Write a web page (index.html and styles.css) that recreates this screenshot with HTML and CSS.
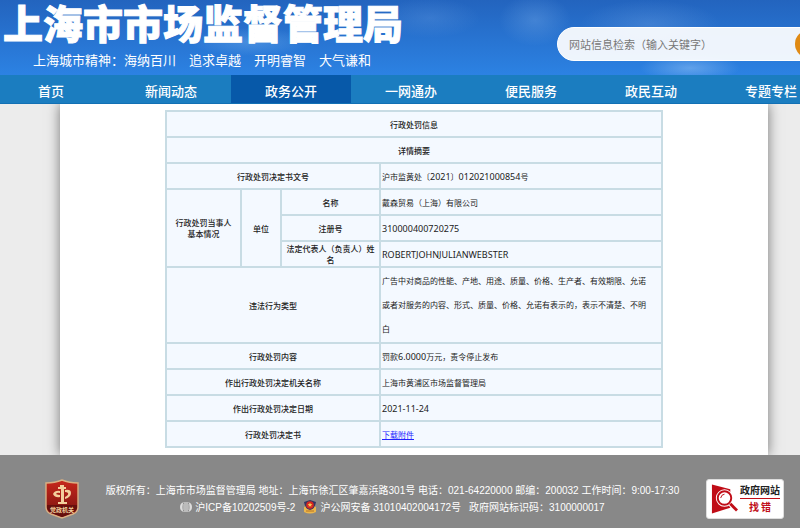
FILE: index.html
```html
<!DOCTYPE html>
<html lang="zh-CN">
<head>
<meta charset="utf-8">
<meta name="viewport" content="width=device-width, initial-scale=1">
<title>上海市市场监督管理局</title>
<link rel="stylesheet" href="styles.css">
</head>
<body>
<header class="banner">
  <div class="brand">
    <h1 class="brand-name">上海市市场监督管理局</h1>
    <p class="motto"><span>上海城市精神：海纳百川</span><span>追求卓越</span><span>开明睿智</span><span>大气谦和</span></p>
  </div>
  <form class="search">
    <input class="search-input" type="text" aria-label="网站信息检索" placeholder="网站信息检索（输入关键字）">
    <button class="search-button" type="button" aria-label="搜索"></button>
  </form>
</header>
<nav class="nav">
  <a href="#">首页</a>
  <a href="#">新闻动态</a>
  <a href="#" class="active">政务公开</a>
  <a href="#">一网通办</a>
  <a href="#">便民服务</a>
  <a href="#">政民互动</a>
  <a href="#">专题专栏</a>
</nav>
<div class="backdrop">
<main class="page">
  <table class="detail">
    <colgroup><col class="c-party"><col class="c-unit"><col class="c-field"><col></colgroup>
    <tbody>
    <tr><th colspan="4">行政处罚信息</th></tr>
    <tr><th colspan="4">详情摘要</th></tr>
    <tr><th colspan="3">行政处罚决定书文号</th><td>沪市监黄处〔<span class="num">2021</span>〕<span class="num">012021000854</span>号</td></tr>
    <tr><th rowspan="3">行政处罚当事人<br>基本情况</th><th rowspan="3">单位</th><th>名称</th><td>戴森贸易（上海）有限公司</td></tr>
    <tr><th>注册号</th><td><span class="num">310000400720275</span></td></tr>
    <tr><th>法定代表人（负责人）姓<br>名</th><td><span class="num">ROBERTJOHNJULIANWEBSTER</span></td></tr>
    <tr><th colspan="3">违法行为类型</th><td class="long">广告中对商品的性能、产地、用途、质量、价格、生产者、有效期限、允诺<br>或者对服务的内容、形式、质量、价格、允诺有表示的，表示不清楚、不明<br>白</td></tr>
    <tr><th colspan="3">行政处罚内容</th><td>罚款<span class="num">6.0000</span>万元，责令停止发布</td></tr>
    <tr><th colspan="3">作出行政处罚决定机关名称</th><td>上海市黄浦区市场监督管理局</td></tr>
    <tr><th colspan="3">作出行政处罚决定日期</th><td><span class="num">2021-11-24</span></td></tr>
    <tr><th colspan="3">行政处罚决定书</th><td><a href="#">下载附件</a></td></tr>
    </tbody>
  </table>
</main>
</div>
<footer class="footer">
  <svg class="shield" viewBox="0 0 34 40" role="img" aria-label="党政机关">
    <defs><linearGradient id="red" x1="0" y1="0" x2="0" y2="1"><stop offset="0" stop-color="#c8281c"/><stop offset="1" stop-color="#74110f"/></linearGradient></defs>
    <path d="M17 1 Q24 4 33 4 V28 Q33 33 28 35 L17 39 L6 35 Q1 33 1 28 V4 Q10 4 17 1Z" fill="url(#red)" stroke="#d9b184" stroke-width="1.4"/>
    <path d="M2 26H32V29Q31 32 27 34L17 38 7 34Q3 32 2 29Z" fill="#650f0d"/>
    <g fill="#f3cf9d"><path d="M15 6h4v2h2v2h-2v14h-3V10h-3V8h2z"/><path d="M8 15q2-4 7-3v2q-3-1-4 1 2 1 4 1v2q-5 1-7-3zM20 11q6-1 6 3t-6 6v-2q4-2 3-4-1-1-3-1zM13 23h9v2h-9z"/></g>
    <text class="shield-text" x="17" y="33" text-anchor="middle">党政机关</text>
  </svg>
  <div class="legal">
    <p>版权所有：上海市市场监督管理局 地址：上海市徐汇区肇嘉浜路301号 电话：021-64220000 邮编：200032 工作时间：9:00-17:30</p>
    <p class="records">
      <span class="record"><svg class="globe" viewBox="0 0 12 12" aria-hidden="true"><path d="M5 1v10M7 1v10" stroke="#eee"/><path d="M4 1Q0 2 0 6t4 5Q2 9 2 6t2-5zM8 1q4 1 4 5t-4 5q2-2 2-5T8 1z" fill="#ddd"/><path d="M3 3v6M9 3v6" stroke="#ddd"/></svg>沪ICP备10202509号-2</span>
      <span class="record"><svg class="police" viewBox="0 0 14 14" aria-hidden="true"><path d="M1 7 1 12Q7 15 13 12L13 7 7 4z" fill="#edb64b"/><path d="M7 0q3 1 6 2-1 7-6 8-5-1-6-8 3-1 6-2z" fill="#343562"/><circle cx="7" cy="5" r="3.8" fill="#d52821"/><path d="M7 2.4l.7 1.5 1.6.2-1.2 1.1.3 1.6L7 6l-1.4.8.3-1.6-1.2-1.1 1.6-.2z" fill="#f6c84c"/><path d="M3 11h8" stroke="#b37427"/></svg>沪公网安备 31010402004172号</span>
      <span class="record">政府网站标识码：3100000017</span>
    </p>
  </div>
  <a class="report" href="#">
    <svg class="report-icon" viewBox="0 0 28 32" aria-hidden="true"><path d="M1 1 20 6V25L1 31Z" fill="#c00d17"/><circle cx="14" cy="15" r="7" fill="#c00d17" stroke="#fff" stroke-width="4"/><circle cx="14" cy="15" r="7" fill="#fff" stroke="#c00d17" stroke-width="2"/><path d="M20 21 27 28" stroke="#fff" stroke-width="5"/><path d="M20 21 27 28" stroke="#c00d17" stroke-width="3"/><path d="M10 15q1-4 4-4" fill="none" stroke="#c00d17"/></svg>
    <span class="report-text"><span class="report-top">政府网站</span><span class="report-bottom"><span>找</span><span>错</span></span></span>
  </a>
</footer>
</body>
</html>
```

FILE: styles.css
```css
* { box-sizing: border-box; }
body {
  margin: 0;
  min-height: 100vh;
  display: flex;
  flex-direction: column;
  overflow-x: hidden;
  font-family: "Noto Sans", "Noto Sans CJK SC", sans-serif;
  background: #ececec;
}
h1, p { margin: 0; }

.banner {
  display: flex;
  justify-content: space-between;
  height: 75px;
  color: #fff;
  font-family: "Noto Sans CJK SC", sans-serif;
  background:
    radial-gradient(ellipse 50px 14px at 690px 68px, rgba(150, 195, 245, .5), transparent),
    radial-gradient(ellipse 70px 24px at 650px 24px, rgba(110, 160, 225, .35), transparent),
    radial-gradient(ellipse 36px 26px at 535px 20px, rgba(110, 165, 230, .4), transparent),
    radial-gradient(ellipse 50px 20px at 430px 18px, rgba(100, 155, 225, .3), transparent),
    radial-gradient(ellipse 60px 14px at 250px 42px, rgba(120, 180, 240, .4), transparent),
    linear-gradient(#2364be, #2c82e3);
}
.brand { padding-left: 3px; }
.brand-name {
  font-size: 40px;
  line-height: 44px;
  font-weight: 900;
  white-space: nowrap;
  -webkit-text-stroke: 1px #fff;
}
.motto {
  display: flex;
  gap: 13px;
  padding-left: 30px;
  font-size: 13px;
  line-height: 32px;
  white-space: nowrap;
}
.search {
  display: flex;
  flex: 0 0 283px;
  height: 34px;
  margin: 27px -40px 0 0;
  border: 1px solid #fff;
  border-radius: 17px;
  background: rgba(255, 255, 255, .92);
}
.search-input {
  flex: 1;
  min-width: 0;
  padding: 0 11px;
  border: 0;
  background: none;
  font: 11px "Noto Sans CJK SC", sans-serif;
  color: #333;
}
.search-input::placeholder { color: #777; }
.search-button {
  width: 44px;
  height: 28px;
  margin-top: 2px;
  border: 0;
  border-radius: 14px;
  background: #e08a14;
}

.nav {
  display: flex;
  height: 29px;
  overflow: hidden;
  background: #1b7dc0;
  border-bottom: 1px solid #1270b4;
}
.nav a {
  flex: 0 0 120px;
  color: #fff;
  font: 500 13px/31px "Noto Sans CJK SC", sans-serif;
  text-align: center;
  text-decoration: none;
}
.nav a:first-child { margin-left: -9px; }
.nav .active { background: #0759a9; }

.backdrop {
  flex: 1;
  display: flex;
  padding: 0 32px 0 60px;
  overflow: hidden;
  background: #ececec;
}
.page {
  flex: 1;
  padding: 6px 105px 7px;
  background: #fff;
  box-shadow: 0 0 12px rgba(0, 0, 0, .5);
}
.detail {
  width: 100%;
  table-layout: fixed;
  border-collapse: collapse;
  color: #222;
  background: #f4f9ff;
  font-size: 8px;
  line-height: 11px;
}
.c-party { width: 75px; }
.c-unit { width: 40px; }
.c-field { width: 99px; }
.detail tr { height: 26px; }
.detail th, .detail td {
  padding: 0 1px;
  border: 2px solid #c8dce4;
}
.detail th { font-weight: 500; text-align: center; }
.detail td { text-align: left; white-space: nowrap; }
.detail .long { padding: 1px; line-height: 24px; }
.detail a { color: #22f; }
.num { font-size: 9px; }

.footer {
  flex: none;
  display: flex;
  align-items: center;
  justify-content: space-between;
  height: 73px;
  padding: 14px 16px 0 45px;
  color: #fff;
  background: #888;
}
.shield { width: 34px; height: 40px; }
.shield-text { font: 700 6px "Noto Sans CJK SC", sans-serif; fill: #f3cf9d; }
.legal {
  font: 10px/17px "Liberation Sans", "Noto Sans CJK SC", sans-serif;
  text-align: center;
  white-space: nowrap;
}
.records { display: flex; justify-content: center; gap: 8px; }
.record { display: flex; align-items: center; gap: 3px; }
.globe { width: 12px; height: 12px; }
.police { width: 14px; height: 14px; }
.report {
  display: flex;
  align-items: center;
  gap: 2px;
  width: 78px;
  height: 40px;
  padding-left: 4px;
  border: 1px solid #ddd;
  border-radius: 3px;
  background: #fff;
  color: #222;
  font-family: "Noto Sans CJK SC", sans-serif;
  text-decoration: none;
}
.report-icon { width: 27px; height: 32px; }
.report-text { display: flex; flex-direction: column; font-weight: 700; }
.report-top { font-size: 10px; line-height: 16px; border-bottom: 1px solid #c00d17; }
.report-bottom {
  display: flex;
  justify-content: center;
  gap: 2px;
  font-size: 10px;
  line-height: 16px;
  color: #c00d17;
}
```
